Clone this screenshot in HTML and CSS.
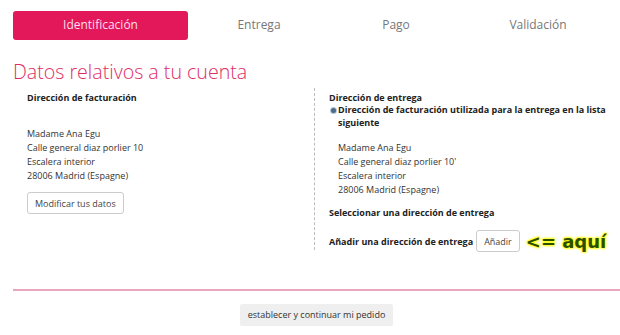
FILE: index.html
```html
<!DOCTYPE html>
<html lang="es">
<head>
  <meta charset="UTF-8">
  <title>Datos relativos a tu cuenta</title>
  <link rel="stylesheet" href="styles.css">
</head>
<body>
  <div class="page">
    <!-- pasos del pedido -->
    <ul class="steps">
      <li class="step active">Identificación</li>
      <li class="step">Entrega</li>
      <li class="step">Pago</li>
      <li class="step">Validación</li>
    </ul>

    <h1>Datos relativos a tu cuenta</h1>

    <div class="columns">
      <div class="col billing">
        <h3>Dirección de facturación</h3>
        <p class="address">
          Madame Ana Egu<br>
          Calle general diaz porlier 10<br>
          Escalera interior<br>
          28006 Madrid (Espagne)
        </p>
        <button class="btn">Modificar tus datos</button>
      </div>

      <div class="col delivery">
        <h3>Dirección de entrega</h3>
        <label class="radio">
          <span class="dot"></span>
          <span>Dirección de facturación utilizada para la entrega en la lista siguiente</span>
        </label>
        <p class="address indent">
          Madame Ana Egu<br>
          Calle general diaz porlier 10'<br>
          Escalera interior<br>
          28006 Madrid (Espagne)
        </p>
        <h3 class="select">Seleccionar una dirección de entrega</h3>
        <div class="add-row">
          <h3>Añadir una dirección de entrega</h3>
          <button class="btn">Añadir</button>
          <span class="note">&lt;= aquí</span>
        </div>
      </div>
    </div>

    <div class="footer">
      <button class="btn grey">establecer y continuar mi pedido</button>
    </div>
  </div>
</body>
</html>
```

FILE: styles.css
```css
body {
  margin: 0;
  font-family: "Open Sans", "DejaVu Sans", sans-serif;
  color: #333;
  background: #fff;
}

.page {
  padding: 11px 0 0 13px;
}

.steps {
  display: flex;
  list-style: none;
  margin: 0;
  padding: 0;
}

.step {
  height: 29px;
  line-height: 27px;
  text-align: center;
  font-size: 12px;
  color: #777;
}

.step:nth-child(1) { width: 175px; }
.step:nth-child(2) { width: 142px; }
.step:nth-child(3) { width: 132px; }
.step:nth-child(4) { width: 152px; }

.step.active {
  background-color: #e2185a;
  color: #fde;
  border-radius: 3px;
}

h1 {
  margin: 19px 0 0;
  font-size: 19.6px;
  font-weight: 300;
  line-height: 26px;
  color: #dd2e63;
}

.columns {
  display: flex;
  margin-top: 2px;
}

.col {
  font-size: 9px;
}

h3 {
  margin: 0;
  font-size: 9px;
  font-weight: 700;
  line-height: 13px;
  color: #222;
}

.billing {
  width: 301px;
  padding-left: 14px;
  padding-top: 4px;
  box-sizing: border-box;
}

.address {
  margin: 0;
  line-height: 14px;
  color: #333;
}

.billing .address {
  margin-top: 23px;
}

.btn {
  font-family: inherit;
  font-size: 9px;
  color: #444;
  background: #fff;
  border: 1px solid #ccc;
  border-radius: 3px;
  padding: 0 7px;
  height: 22px;
}

.billing .btn {
  margin-top: 9px;
}

.delivery {
  border-left: 1px dashed #bbb;
  padding: 3px 0 0 14px;
  width: 306px;
  box-sizing: border-box;
  margin-top: 1px;
  height: 162px;
}

.radio {
  display: flex;
  font-weight: 700;
  line-height: 12.5px;
  color: #222;
}

.dot {
  flex: none;
  width: 5px;
  height: 5px;
  margin: 4px 2px 0 2px;
  border-radius: 50%;
  background: #4a6b8a;
  box-shadow: 0 0 0 1px #b8c8d8;
}

.indent {
  margin: 12px 0 0 9px;
}

.select {
  margin-top: 9px;
}

.add-row {
  display: flex;
  align-items: center;
  gap: 3px;
  margin-top: 11px;
  white-space: nowrap;
}

.add-row .btn {
  padding: 0 7px;
}

.note {
  margin-left: 3px;
  font-family: "DejaVu Sans", sans-serif;
  font-size: 18px;
  font-weight: 700;
  color: #2b4d00;
  text-shadow: 0 0 2px #ffff00, 0 0 2px #ffff00, 0 0 3px #ffff00, 0 0 3px #ffff00;
}

.footer {
  margin-top: 39px;
  border-top: 2px solid #e9a6bd;
  padding-top: 10px;
  text-align: center;
}

.btn.grey {
  background: #efefef;
  border: none;
  border-radius: 2px;
  padding: 0 8px;
  color: #333;
}
```
